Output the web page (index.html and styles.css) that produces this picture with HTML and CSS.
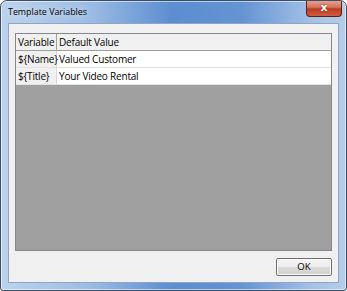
FILE: index.html
```html
<!DOCTYPE html>
<html>
<head>
<meta charset="utf-8">
<link rel="stylesheet" href="styles.css">
</head>
<body>
<div class="window">
  <div class="titlebar">
    <span class="title">Template Variables</span>
    <div class="close"><span>x</span></div>
  </div>
  <div class="client">
    <div class="grid">
      <div class="row head">
        <div class="c1">Variable</div>
        <div class="c2">Default Value</div>
      </div>
      <div class="row">
        <div class="c1">${Name}</div>
        <div class="c2">Valued Customer</div>
      </div>
      <div class="row">
        <div class="c1">${Title}</div>
        <div class="c2">Your Video Rental</div>
      </div>
      <div class="empty"></div>
    </div>
    <div class="buttons">
      <button class="ok">OK</button>
    </div>
  </div>
</div>
</body>
</html>
```
FILE: styles.css
```css
html, body {
  margin: 0;
  padding: 0;
  background: #ffffff;
}
.window {
  width: 347px;
  height: 291px;
  box-sizing: border-box;
  border: 1px solid #3d4f66;
  border-radius: 7px 7px 3px 3px;
  background: linear-gradient(90deg, #bcd2ec 0%, #9ebde4 25%, #5b8dd0 50%, #6594d3 70%, #a3c1e6 90%, #b6cdea 100%);
  display: flex;
  flex-direction: column;
  font-family: "Open Sans", "Noto Sans", sans-serif;
  font-size: 10px;
  color: #000;
  overflow: hidden;
  box-shadow: inset 0 0 0 1px rgba(255,255,255,0.55);
}
.titlebar {
  height: 21px;
  display: flex;
  align-items: flex-start;
  justify-content: space-between;
  padding-left: 7px;
  flex: none;
}
.title {
  font-family: "Open Sans", sans-serif;
  font-size: 8.9px;
  line-height: 12px;
  margin-top: 5px;
  color: #000;
  text-shadow: 0 0 6px rgba(255,255,255,0.9);
}
.close {
  width: 36px;
  height: 17px;
  margin-right: 4px;
  margin-top: -1px;
  box-sizing: border-box;
  border: 1px solid #5a1f17;
  border-top: none;
  border-radius: 0 0 4px 4px;
  background: linear-gradient(180deg, #eaa898 0%, #d8735e 45%, #bb3c22 55%, #d25c3f 100%);
  display: flex;
  align-items: center;
  justify-content: center;
}
.close span {
  font-family: "DejaVu Sans", sans-serif;
  font-weight: bold;
  font-size: 11px;
  line-height: 11px;
  color: #ffffff;
  text-shadow: 0 0 2px #5a1f17;
  margin-top: -1px;
}
.client {
  flex: 1;
  margin: 1px 7px 7px 7px;
  background: #f0f0f0;
  border: 1px solid #8ea6c4;
  display: flex;
  flex-direction: column;
  padding: 9px 6px 6px 6px;
}
.grid {
  flex: 1;
  border: 1px solid #828790;
  background: #a0a0a0;
  display: flex;
  flex-direction: column;
  letter-spacing: -0.2px;
}
.row {
  display: flex;
  height: 16px;
  background: #ffffff;
  border-bottom: 1px solid #e1e1e1;
}
.row.head {
  background: #f0f0f0;
  border-bottom: 1px solid #a0a0a0;
}
.c1, .c2 {
  line-height: 16px;
  padding-left: 2px;
  white-space: nowrap;
}
.c1 {
  width: 38px;
  padding-left: 2px;
  background: #f0f0f0;
  border-right: 1px solid #a0a0a0;
}
.row:not(.head) .c1 {
  border-right-color: #d8d8d8;
}
.c2 {
  flex: 1;
}
.empty {
  flex: 1;
}
.buttons {
  display: flex;
  justify-content: flex-end;
  padding-top: 7px;
}
.ok {
  width: 56px;
  height: 18px;
  font-family: "Open Sans", sans-serif;
  font-size: 9.6px;
  line-height: 14px;
  padding: 0;
  background: linear-gradient(180deg, #f6f6f6 0%, #ebebeb 50%, #dddddd 51%, #cfcfcf 100%);
  border: 1px solid #707070;
  border-radius: 2px;
  color: #000;
  box-shadow: inset 0 0 0 1px #fbfbfb;
}
```
